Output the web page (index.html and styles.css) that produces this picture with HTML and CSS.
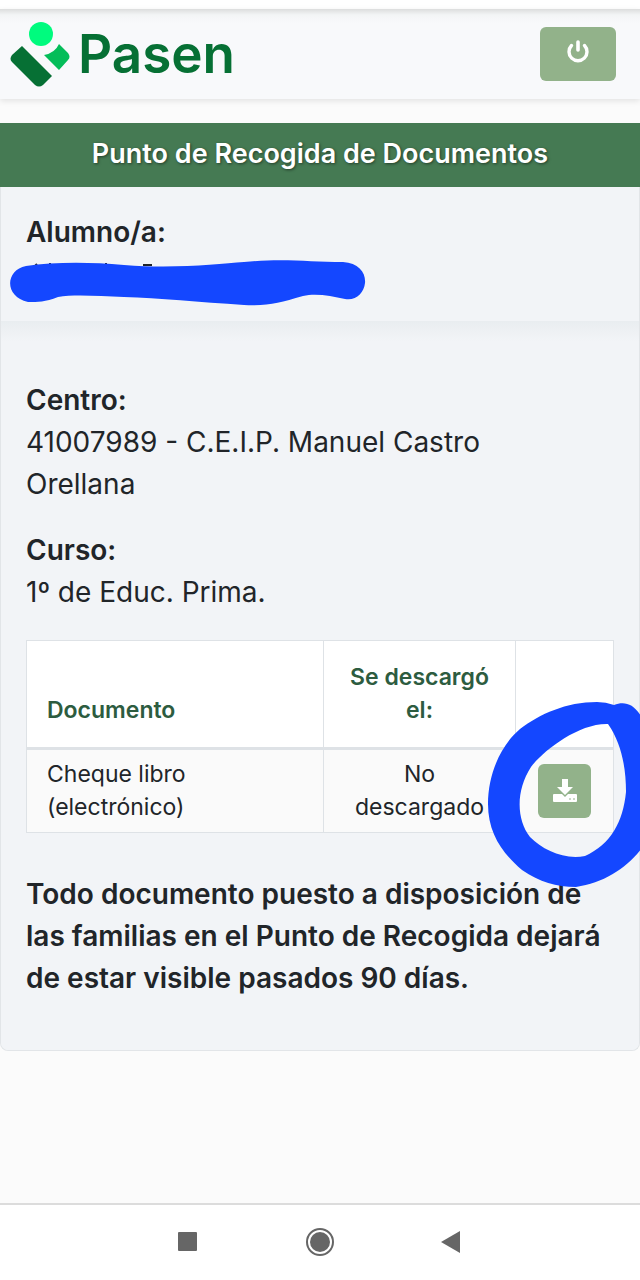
FILE: index.html
```html
<!DOCTYPE html>
<html lang="es">
<head>
    <meta charset="UTF-8">
    <meta name="viewport" content="width=device-width, initial-scale=1.0">
    <title>Pasen - Punto de Recogida de Documentos</title>
    <link rel="stylesheet" href="styles.css">
</head>
<body>

<header class="top-bar">
    <a class="brand" href="#">
        <svg class="brand-mark" viewBox="0 0 60 67" aria-hidden="true">
            <circle cx="31" cy="13" r="12" fill="#00fb7e"/>
            <path d="M34 34Q45 32 49 23L58 32Q61 36 58 39L49 49Z" fill="#04bd59"/>
            <path d="M12 25L42 55L33 64Q29 67 25 64L2 41Q-1 38 2 34Z" fill="#067034"/>
        </svg>
        <span class="brand-name">Pasen</span>
    </a>
    <button class="btn btn-logout" type="button" aria-label="Salir">
        <svg width="24" height="24" viewBox="0 0 24 24" fill="none" stroke="#fff" stroke-linecap="round" aria-hidden="true">
            <path d="M5.5 6.5A9 9 0 1 0 18.5 6.5" stroke-width="3.4"/>
            <path d="M12 3V11" stroke-width="3.6"/>
        </svg>
    </button>
</header>

<main>
    <h1 class="page-title">Punto de Recogida de Documentos</h1>

    <div class="card">
        <!-- Alumno -->
        <section class="student">
            <h2>Alumno/a:</h2>
            <div class="redacted">
                <svg class="scribble" width="358" height="48" viewBox="0 0 358 48" aria-hidden="true">
                    <path d="M26 7L28 5M41 7V4M97 7V4M134 6H143" stroke="#212529" stroke-width="2"/>
                    <path d="M17 7C45 3 80 3 115 6C165 10 210 5 235 3C275 -1 300 3 334 3C350 4 357 14 356 24C355 34 347 42 336 40C322 37 307 34 294 37C270 44 260 47 235 46C190 43 150 39 115 38C90 37 65 35 49 38C36 43 29 43 19 43C-5 38-4 11 17 7Z" fill="#1447ff"/>
                </svg>
            </div>
        </section>

        <!-- Centro, curso y documentos -->
        <section class="details">
            <h2>Centro:</h2>
            <p class="value">41007989 - C.E.I.P. Manuel Castro Orellana</p>
            <h2>Curso:</h2>
            <p class="value">1º de Educ. Prima.</p>

            <div class="table-wrap">
                <table class="documents">
                    <thead>
                        <tr>
                            <th class="col-doc">Documento</th>
                            <th class="col-date">Se descargó el:</th>
                            <th class="col-action"></th>
                        </tr>
                    </thead>
                    <tbody>
                        <tr>
                            <td>Cheque libro (electrónico)</td>
                            <td class="col-date">No descargado</td>
                            <td class="col-action">
                                <button class="btn btn-download" type="button" aria-label="Descargar">
                                    <svg width="24" height="24" viewBox="0 0 24 24" fill="#fff" aria-hidden="true">
                                        <path d="M9 0H15V8H20L12 16L4 8H9Z"/>
                                        <path d="M1 15H9L12 18L15 15H23Q24 15 24 16V22Q24 23 23 23H1Q0 23 0 22V16Q0 15 1 15Z"/>
                                        <path d="M16 20H18M20 20H22" stroke="#92b28a" stroke-width="1"/>
                                    </svg>
                                </button>
                            </td>
                        </tr>
                    </tbody>
                </table>
                <svg class="ring" width="154" height="188" viewBox="0 0 154 188" aria-hidden="true">
                    <path fill-rule="evenodd" fill="#1447ff" d="M109 2C78 2 52 14 32 29C12 46 0 75 0 104C0 133 14 153 34 170C52 182 68 187 88 187C116 183 139 168 154 148V18C146 3 136 1 126 5Q118 2 109 2ZM120 24C134 44 138 69 138 92C135 122 123 144 97 156C76 160 55 150 42 137C28 119 28 90 43 67C54 52 90 23 120 24Z"/>
                </svg>
            </div>

            <p class="notice">Todo documento puesto a disposición de las familias en el Punto de Recogida dejará de estar visible pasados 90 días.</p>
        </section>
    </div>
</main>

<nav class="system-nav">
    <button type="button" aria-label="Recientes">
        <svg width="30" height="30" viewBox="0 0 30 30" aria-hidden="true"><rect x="5" y="5" width="19" height="19" rx="1" fill="#666"/></svg>
    </button>
    <button type="button" aria-label="Inicio">
        <svg width="30" height="30" viewBox="0 0 30 30" aria-hidden="true"><circle cx="15" cy="15" r="13" fill="none" stroke="#666" stroke-width="2"/><circle cx="15" cy="15" r="10" fill="#666"/></svg>
    </button>
    <button type="button" aria-label="Atrás">
        <svg width="30" height="30" viewBox="0 0 30 30" aria-hidden="true"><path d="M4 15L23 4V26Z" fill="#666"/></svg>
    </button>
</nav>

</body>
</html>
```

FILE: styles.css
```css
* {
    box-sizing: border-box;
}
body {
    display: flex;
    flex-direction: column;
    min-height: 100vh;
    margin: 0;
    padding-top: 9px;
    background: #fff;
    color: #212529;
    font-family: Inter, "Liberation Sans", sans-serif;
    font-size: 28px;
    line-height: 42px;
    overflow-x: hidden;
}
h1, h2, p {
    margin: 0;
}
.top-bar {
    position: relative;
    display: flex;
    align-items: center;
    justify-content: space-between;
    height: 90px;
    padding: 0 24px 0 10px;
    background: linear-gradient(#dcdddd, #f3f5f6 6px, #f8f9fb 14px);
    box-shadow: 0 2px 6px rgba(0,0,0,0.1);
}
.brand {
    display: flex;
    align-items: center;
    gap: 8px;
    color: #067034;
    text-decoration: none;
}
.brand-mark {
    width: 60px;
    height: 67px;
}
.brand-name {
    font-size: 53px;
    font-weight: 600;
    line-height: 60px;
}
.btn {
    display: inline-flex;
    align-items: center;
    justify-content: center;
    height: 54px;
    padding: 0;
    background: #92b28a;
    border: none;
    border-radius: 6px;
    cursor: pointer;
}
.btn-logout {
    width: 76px;
    padding-bottom: 6px;
}
.btn-download {
    width: 53px;
}
main {
    flex: 1;
    padding-top: 24px;
    background: #fbfbfb;
}
.page-title {
    padding: 10px 24px 12px;
    background: #457a53;
    color: #fff;
    font-size: 27px;
    font-weight: 600;
    line-height: 42px;
    text-align: center;
    text-shadow: 1px 1px 3px rgba(0,0,0,0.5);
}
.card {
    background: #f2f4f7;
    border: 1px solid #e2e5e8;
    border-top: none;
    border-radius: 0 0 8px 8px;
}
.card h2 {
    font-size: 28px;
    font-weight: 600;
    line-height: 42px;
}
.student {
    padding: 24px 25px 26px;
}
.redacted {
    position: relative;
    height: 42px;
}
.scribble {
    position: absolute;
    top: 6px;
    left: -17px;
}
.details {
    padding: 58px 25px 51px;
    background: linear-gradient(#e9edf0, #f2f4f7 20px);
    border-radius: 0 0 8px 8px;
}
.value {
    padding-right: 24px;
}
.value + h2 {
    margin-top: 24px;
}
.table-wrap {
    position: relative;
    margin-top: 27px;
}
.documents {
    width: 100%;
    border-collapse: collapse;
    table-layout: fixed;
    background: #fff;
    font-size: 23px;
    line-height: 33px;
}
.documents th,
.documents td {
    padding: 8px 20px;
    border: 1px solid #dee2e6;
    text-align: left;
}
.documents th {
    padding: 20px;
    border-bottom: 3px solid #dee2e6;
    color: #2d5c40;
    font-weight: 600;
    vertical-align: bottom;
}
.documents td {
    background: #fafafa;
}
.documents .col-date {
    width: 192px;
    text-align: center;
}
.documents .col-action {
    width: 98px;
    padding: 0;
    text-align: center;
    vertical-align: middle;
}
.col-action .btn {
    vertical-align: middle;
}
.ring {
    position: absolute;
    top: 60px;
    right: -28px;
}
.notice {
    margin-top: 40px;
    font-weight: 600;
}
.system-nav {
    display: flex;
    justify-content: center;
    gap: 102px;
    padding: 22px 0 23px;
    background: #fff;
    border-top: 2px solid #dcdcdc;
}
.system-nav button {
    display: flex;
    padding: 0;
    background: none;
    border: none;
}
```
